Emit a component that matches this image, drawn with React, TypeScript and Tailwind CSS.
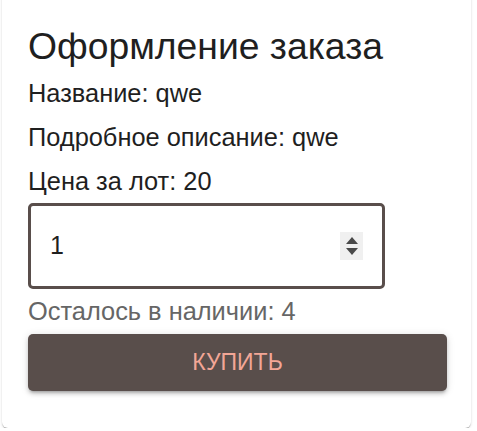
export default function App() {
  return (
    <div className="min-h-screen bg-white pl-[2px] pr-[6px] font-['Liberation_Sans',Arial,sans-serif]">
      <div className="-mt-2 rounded-b-md bg-white pt-[33px] pb-[37px] pl-[26px] pr-[25px] shadow-[0_2px_1px_-1px_rgba(0,0,0,0.2),0_1px_1px_0_rgba(0,0,0,0.14),0_1px_3px_0_rgba(0,0,0,0.12)]">
        <h1 className="text-[37.3px] leading-[42px] text-[#1f1f1f]">Оформление заказа</h1>
        <p className="mt-[11px] text-[25.4px] leading-[30px] text-[#1f1f1f]">Название: qwe</p>
        <p className="mt-[14px] text-[25.4px] leading-[30px] text-[#1f1f1f]">Подробное описание: qwe</p>
        <p className="mt-[14px] text-[25.4px] leading-[30px] text-[#1f1f1f]">Цена за лот: 20</p>
        <div className="mt-[7px] flex h-[86px] w-[357px] items-center rounded-[5px] border-[3px] border-[#594e4b] pl-[19px] pr-[19px]">
          <span className="flex-1 text-[25px] text-[#1f1f1f]">1</span>
          <div className="flex h-[28px] w-[23px] flex-col items-center justify-center gap-[4px] bg-[#f0f0f0]">
            <svg width="12" height="7" viewBox="0 0 12 7"><path d="M6 0 L12 7 L0 7 Z" fill="#4a4a4a" /></svg>
            <svg width="12" height="7" viewBox="0 0 12 7"><path d="M0 0 L12 0 L6 7 Z" fill="#4a4a4a" /></svg>
          </div>
        </div>
        <p className="mt-[7px] text-[25.4px] leading-[30px] text-[#666666]">Осталось в наличии: 4</p>
        <button className="mt-[8px] flex h-[57px] w-[419px] items-center justify-center rounded-[5px] bg-[#594e4b] text-[23px] uppercase text-[#f2a696] shadow-[0_3px_3px_-2px_rgba(0,0,0,0.25),0_3px_4px_0_rgba(0,0,0,0.14),0_1px_8px_0_rgba(0,0,0,0.12)]">
          Купить
        </button>
      </div>
    </div>
  );
}
